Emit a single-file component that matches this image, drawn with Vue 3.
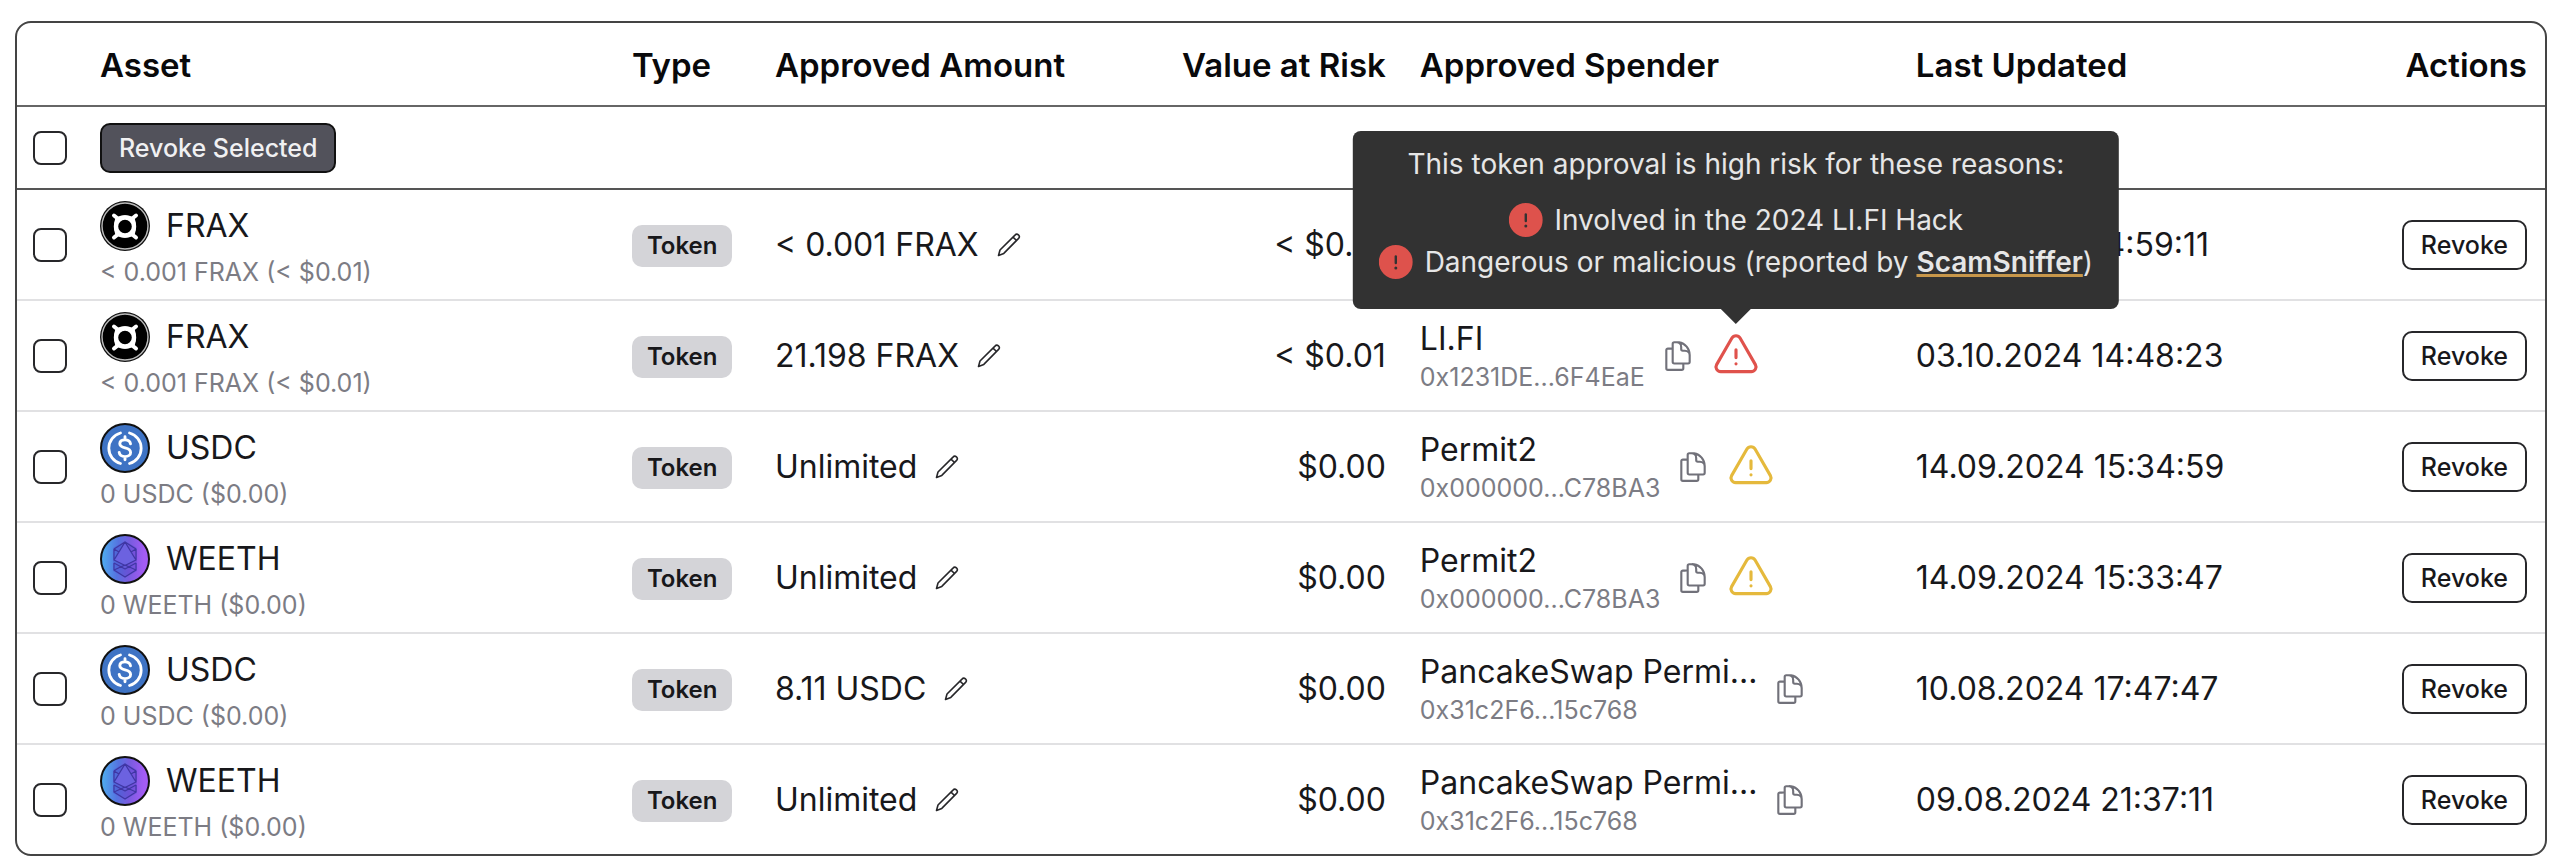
<script setup>
import { ref } from 'vue'

const rows = ref([
  { coin: 'frax', asset: 'FRAX', balance: '< 0.001 FRAX (< $0.01)', amount: '< 0.001 FRAX', value: '< $0.01', spender: 'LI.FI', address: '0x1231DE...6F4EaE', risk: '', tip: false, updated: '03.10.2024 14:59:11', checked: false },
  { coin: 'frax', asset: 'FRAX', balance: '< 0.001 FRAX (< $0.01)', amount: '21.198 FRAX', value: '< $0.01', spender: 'LI.FI', address: '0x1231DE...6F4EaE', risk: 'high', tip: true, updated: '03.10.2024 14:48:23', checked: false },
  { coin: 'usdc', asset: 'USDC', balance: '0 USDC ($0.00)', amount: 'Unlimited', value: '$0.00', spender: 'Permit2', address: '0x000000...C78BA3', risk: 'medium', tip: false, updated: '14.09.2024 15:34:59', checked: false },
  { coin: 'weeth', asset: 'WEETH', balance: '0 WEETH ($0.00)', amount: 'Unlimited', value: '$0.00', spender: 'Permit2', address: '0x000000...C78BA3', risk: 'medium', tip: false, updated: '14.09.2024 15:33:47', checked: false },
  { coin: 'usdc', asset: 'USDC', balance: '0 USDC ($0.00)', amount: '8.11 USDC', value: '$0.00', spender: 'PancakeSwap Permi...', address: '0x31c2F6...15c768', risk: '', tip: false, updated: '10.08.2024 17:47:47', checked: false },
  { coin: 'weeth', asset: 'WEETH', balance: '0 WEETH ($0.00)', amount: 'Unlimited', value: '$0.00', spender: 'PancakeSwap Permi...', address: '0x31c2F6...15c768', risk: '', tip: false, updated: '09.08.2024 21:37:11', checked: false }
])

const all = ref(false)

function toggleAll() {
  rows.value.forEach((row) => { row.checked = all.value })
}
</script>

<template>
  <main class="page">
    <div class="frame">
      <table class="allowances">
        <colgroup>
          <col class="c-check"><col class="c-asset"><col class="c-type"><col class="c-amount">
          <col class="c-value"><col class="c-spender"><col class="c-updated"><col class="c-actions">
        </colgroup>
        <thead>
          <tr class="head">
            <td></td>
            <th scope="col">Asset</th>
            <th scope="col">Type</th>
            <th scope="col">Approved Amount</th>
            <th scope="col" class="right">Value at Risk</th>
            <th scope="col">Approved Spender</th>
            <th scope="col">Last Updated</th>
            <th scope="col" class="right">Actions</th>
          </tr>
          <tr class="bulk">
            <td><input v-model="all" type="checkbox" class="check" aria-label="Select all approvals" @change="toggleAll"></td>
            <td colspan="7"><button type="button" class="btn dark">Revoke Selected</button></td>
          </tr>
        </thead>
        <tbody>
          <tr v-for="(row, i) in rows" :key="i" class="row">
            <td><input v-model="row.checked" type="checkbox" class="check" :aria-label="'Select ' + row.asset + ' approval'"></td>
            <td>
              <div class="asset">
                <svg v-if="row.coin === 'frax'" class="coin" viewBox="0 0 50 50" aria-hidden="true">
                  <circle cx="25" cy="25" r="25" fill="#111" />
                  <circle cx="25" cy="25" r="23" fill="#000" stroke="#bbb" stroke-width="1.4" />
                  <path d="M14 14.5l5 4M36 14.5l-5 4M14 36.5l5-4M36 36.5l-5-4" stroke="#fff" stroke-width="4" stroke-linecap="round" />
                  <circle cx="25" cy="25.5" r="9" fill="none" stroke="#fff" stroke-width="4.4" />
                  <path d="M17 17.5q8-4 16 0M17 33.5q8 4 16 0M16.500 18q-2.500 7.500 0 15M33.500 18q2.500 7.500 0 15" fill="none" stroke="#fff" stroke-width="2.600" />
                </svg>
                <svg v-else-if="row.coin === 'usdc'" class="coin" viewBox="0 0 50 50" aria-hidden="true">
                  <circle cx="25" cy="25" r="24" fill="#3e73c4" stroke="#111" stroke-width="2" />
                  <path d="M20.500 10a15.800 15.800 0 0 0 0 30.500M29.500 10a15.800 15.800 0 0 1 0 30.500" fill="none" stroke="#fff" stroke-width="2.800" stroke-linecap="round" />
                  <path d="M30.500 20.800c-.5-2.800-2.700-3.900-5.500-3.900-3.200 0-5.200 1.600-5.200 3.900 0 5.600 10.800 2.600 10.800 8.600 0 2.500-2.200 4.200-5.600 4.200-3.200 0-5.400-1.400-5.800-4.200M25 13.800v3M25 33.600v3.200" fill="none" stroke="#fff" stroke-width="2.900" stroke-linecap="round" />
                </svg>
                <svg v-else class="coin" viewBox="0 0 50 50" aria-hidden="true">
                  <defs>
                    <linearGradient :id="'g' + i" x1="0" y1="0.400" x2="1" y2="0.450">
                      <stop offset="0.050" stop-color="#4fa8ee" />
                      <stop offset="0.350" stop-color="#5573e0" />
                      <stop offset="0.600" stop-color="#7a5be0" />
                      <stop offset="0.900" stop-color="#a35cf5" />
                    </linearGradient>
                  </defs>
                  <circle cx="25" cy="25" r="24" :fill="'url(#g' + i + ')'" stroke="#111" stroke-width="2" />
                  <path d="M13 14L25 7l12 7v23l-12 6.500L13 37z" fill="#4a3fc4" fill-opacity=".3" />
                  <path d="M25 9l10 17-10 5-10-5z" fill="#6c62e0" />
                  <path d="M25 8L14 26l11 5.500L36 26zM14 29l11 6 11-6M14 29v7l11 7 11-7v-7M14 15v11M36 15v11M14 15l5 3M36 15l-5 3M14 15l11-7 11 7M14 36l11-5 11 5" fill="none" stroke="#3f36a3" stroke-width="1.200" stroke-linejoin="round" />
                </svg>
                <span class="name">{{ row.asset }}</span>
              </div>
              <div class="sub balance">{{ row.balance }}</div>
            </td>
            <td><span class="badge">Token</span></td>
            <td>
              <div class="amount">
                <span>{{ row.amount }}</span>
                <button type="button" class="icon-btn" aria-label="Edit amount">
                  <svg class="pencil" viewBox="0 0 24 24" aria-hidden="true">
                    <path d="M1.500 22.500l1.500-5.500L18 2.100a2.200 2.200 0 0 1 3.600 3.300L6.800 20.400zM16 4.100l3.500 3.400" fill="none" stroke="currentColor" stroke-width="1.600" stroke-linejoin="round" />
                  </svg>
                </button>
              </div>
            </td>
            <td class="right">{{ row.value }}</td>
            <td>
              <div class="spender">
                <div class="who">
                  <div class="who-name">{{ row.spender }}</div>
                  <div class="sub">{{ row.address }}</div>
                </div>
                <button type="button" class="icon-btn" aria-label="Copy address">
                  <svg class="copy" viewBox="0 0 24 24" fill="none" stroke="currentColor" stroke-width="1.500" stroke-linecap="round" stroke-linejoin="round" aria-hidden="true">
                    <path d="M15.750 17.250v3.375c0 .621-.504 1.125-1.125 1.125h-9.750a1.125 1.125 0 0 1-1.125-1.125V7.875c0-.621.504-1.125 1.125-1.125H6.750a9.060 9.060 0 0 1 1.500.124m7.500 10.376h3.375c.621 0 1.125-.504 1.125-1.125V11.250c0-4.460-3.243-8.161-7.500-8.876a9.060 9.060 0 0 0-1.500-.124H9.375c-.621 0-1.125.504-1.125 1.125v3.500m7.500 10.375H9.375a1.125 1.125 0 0 1-1.125-1.125v-9.250m12 6.625v-1.875a3.375 3.375 0 0 0-3.375-3.375h-1.500a1.125 1.125 0 0 1-1.125-1.125v-1.500a3.375 3.375 0 0 0-3.375-3.375H9.750" />
                  </svg>
                </button>
                <span v-if="row.risk" class="risk" :class="row.risk">
                  <svg class="warning" viewBox="0 0 24 24" fill="none" stroke="currentColor" stroke-width="1.500" stroke-linecap="round" stroke-linejoin="round" aria-hidden="true">
                    <path d="M12 9v3.750m-9.303 3.376c-.866 1.500.217 3.374 1.948 3.374h14.710c1.730 0 2.813-1.874 1.948-3.374L13.949 3.378c-.866-1.500-3.032-1.500-3.898 0L2.697 16.126zM12 15.750h.007v.008H12v-.008z" />
                  </svg>
                  <span v-if="row.tip" class="tooltip" role="tooltip">
                    <span class="tip-line lead">This token approval is high risk for these reasons:</span>
                    <span class="tip-line">
                      <svg class="alert" viewBox="0 0 34 34" aria-hidden="true"><circle cx="17" cy="17" r="17" fill="#de524c" /><path d="M17 11.500v6.500" stroke="#333" stroke-width="2.400" stroke-linecap="round" /><circle cx="17" cy="23" r="1.500" fill="#333" /></svg>
                      <span>Involved in the 2024 LI.FI Hack</span>
                    </span>
                    <span class="tip-line">
                      <svg class="alert" viewBox="0 0 34 34" aria-hidden="true"><circle cx="17" cy="17" r="17" fill="#de524c" /><path d="M17 11.500v6.500" stroke="#333" stroke-width="2.400" stroke-linecap="round" /><circle cx="17" cy="23" r="1.500" fill="#333" /></svg>
                      <span>Dangerous or malicious (reported by <a href="#scamsniffer">ScamSniffer</a>)</span>
                    </span>
                  </span>
                </span>
              </div>
            </td>
            <td>{{ row.updated }}</td>
            <td class="right"><button type="button" class="btn">Revoke</button></td>
          </tr>
        </tbody>
      </table>
    </div>
  </main>
</template>

<style>
body {
  background: #fff;
}
</style>

<style scoped>
.page {
  padding: 21px 9px 12px 15px;
  font-family: Inter, "Liberation Sans", sans-serif;
  font-size: 32px;
  line-height: 40px;
  color: #18181b;
}
.frame {
  border: 2px solid #444;
  border-radius: 16px;
}
.allowances {
  width: 100%;
  table-layout: fixed;
  border-collapse: separate;
  border-spacing: 0;
}
.c-check { width: 2.65%; }
.c-asset { width: 21.04%; }
.c-type { width: 5.66%; }
.c-amount { width: 13.45%; }
.c-value { width: 12.06%; }
.c-spender { width: 19.62%; }
.c-updated { width: 16.58%; }
.c-actions { width: 8.94%; }
th,
td {
  padding: 0 18px 0 16px;
  text-align: left;
  vertical-align: middle;
  white-space: nowrap;
}
th {
  font-size: 33px;
  font-weight: 600;
  color: #09090b;
}
.right {
  text-align: right;
}
.head > * {
  height: 80px;
  padding-top: 2px;
  border-bottom: 2px solid #666;
}
.bulk > * {
  height: 81px;
  border-bottom: 2px solid #555;
}
.row > * {
  padding-top: 11px;
  padding-bottom: 10px;
  border-bottom: 2px solid #e1e1e3;
}
.row:last-child > * {
  border-bottom: 0;
}
.check {
  appearance: none;
  display: block;
  box-sizing: border-box;
  width: 34px;
  height: 34px;
  margin: 0;
  border: 2px solid #27272a;
  border-radius: 8px;
  background: #fff;
}
.check:checked {
  background: #27272a;
}
.btn {
  display: inline-block;
  box-sizing: border-box;
  height: 50px;
  padding: 0 17px;
  border: 2px solid #27272a;
  border-radius: 10px;
  background: #fff;
  color: #18181b;
  font: 500 25px/40px Inter, "Liberation Sans", sans-serif;
  vertical-align: middle;
}
.btn.dark {
  border-color: #111;
  background: #52525b;
  color: #f0f0f2;
}
.asset {
  display: flex;
  align-items: center;
  gap: 16px;
  height: 50px;
}
.coin {
  width: 50px;
  height: 50px;
}
.sub {
  font-size: 25px;
  line-height: 34px;
  color: #7c7c84;
}
.balance {
  padding-top: 4px;
}
.badge {
  display: inline-block;
  padding: 0 15px;
  border-radius: 10px;
  background: #d4d4d8;
  font-size: 24px;
  font-weight: 600;
  line-height: 42px;
  vertical-align: middle;
}
.amount,
.spender {
  display: flex;
  align-items: center;
  gap: 16px;
}
.amount {
  gap: 18px;
}
.icon-btn {
  display: block;
  padding: 0;
  border: 0;
  background: none;
  color: #27272a;
}
.icon-btn svg {
  display: block;
}
.pencil {
  width: 24px;
  height: 24px;
}
.copy {
  width: 34px;
  height: 34px;
  color: #71717a;
}
.who-name {
  line-height: 42px;
}
.risk {
  position: relative;
}
.high { color: #e0524c; }
.medium { color: #e5b93c; }
.warning {
  display: block;
  width: 50px;
  height: 50px;
}
.tooltip {
  position: absolute;
  z-index: 1;
  bottom: calc(100% + 22px);
  left: 50%;
  transform: translateX(-50%);
  padding: 12px 26px 26px;
  border-radius: 8px;
  background: #323232;
  color: #e6e6e6;
  font-size: 28px;
}
.tooltip::after {
  content: "";
  position: absolute;
  top: 100%;
  left: 50%;
  margin-left: -15px;
  border: 15px solid transparent;
  border-top-color: #323232;
  border-bottom: 0;
}
.tip-line {
  display: flex;
  align-items: center;
  justify-content: center;
  gap: 12px;
  line-height: 42px;
}
.lead {
  margin-bottom: 14px;
}
.alert {
  width: 34px;
  height: 34px;
}
.tooltip a {
  color: inherit;
  font-weight: 600;
  text-decoration: underline;
  text-decoration-color: #c8974a;
  text-decoration-thickness: 3px;
}
</style>
